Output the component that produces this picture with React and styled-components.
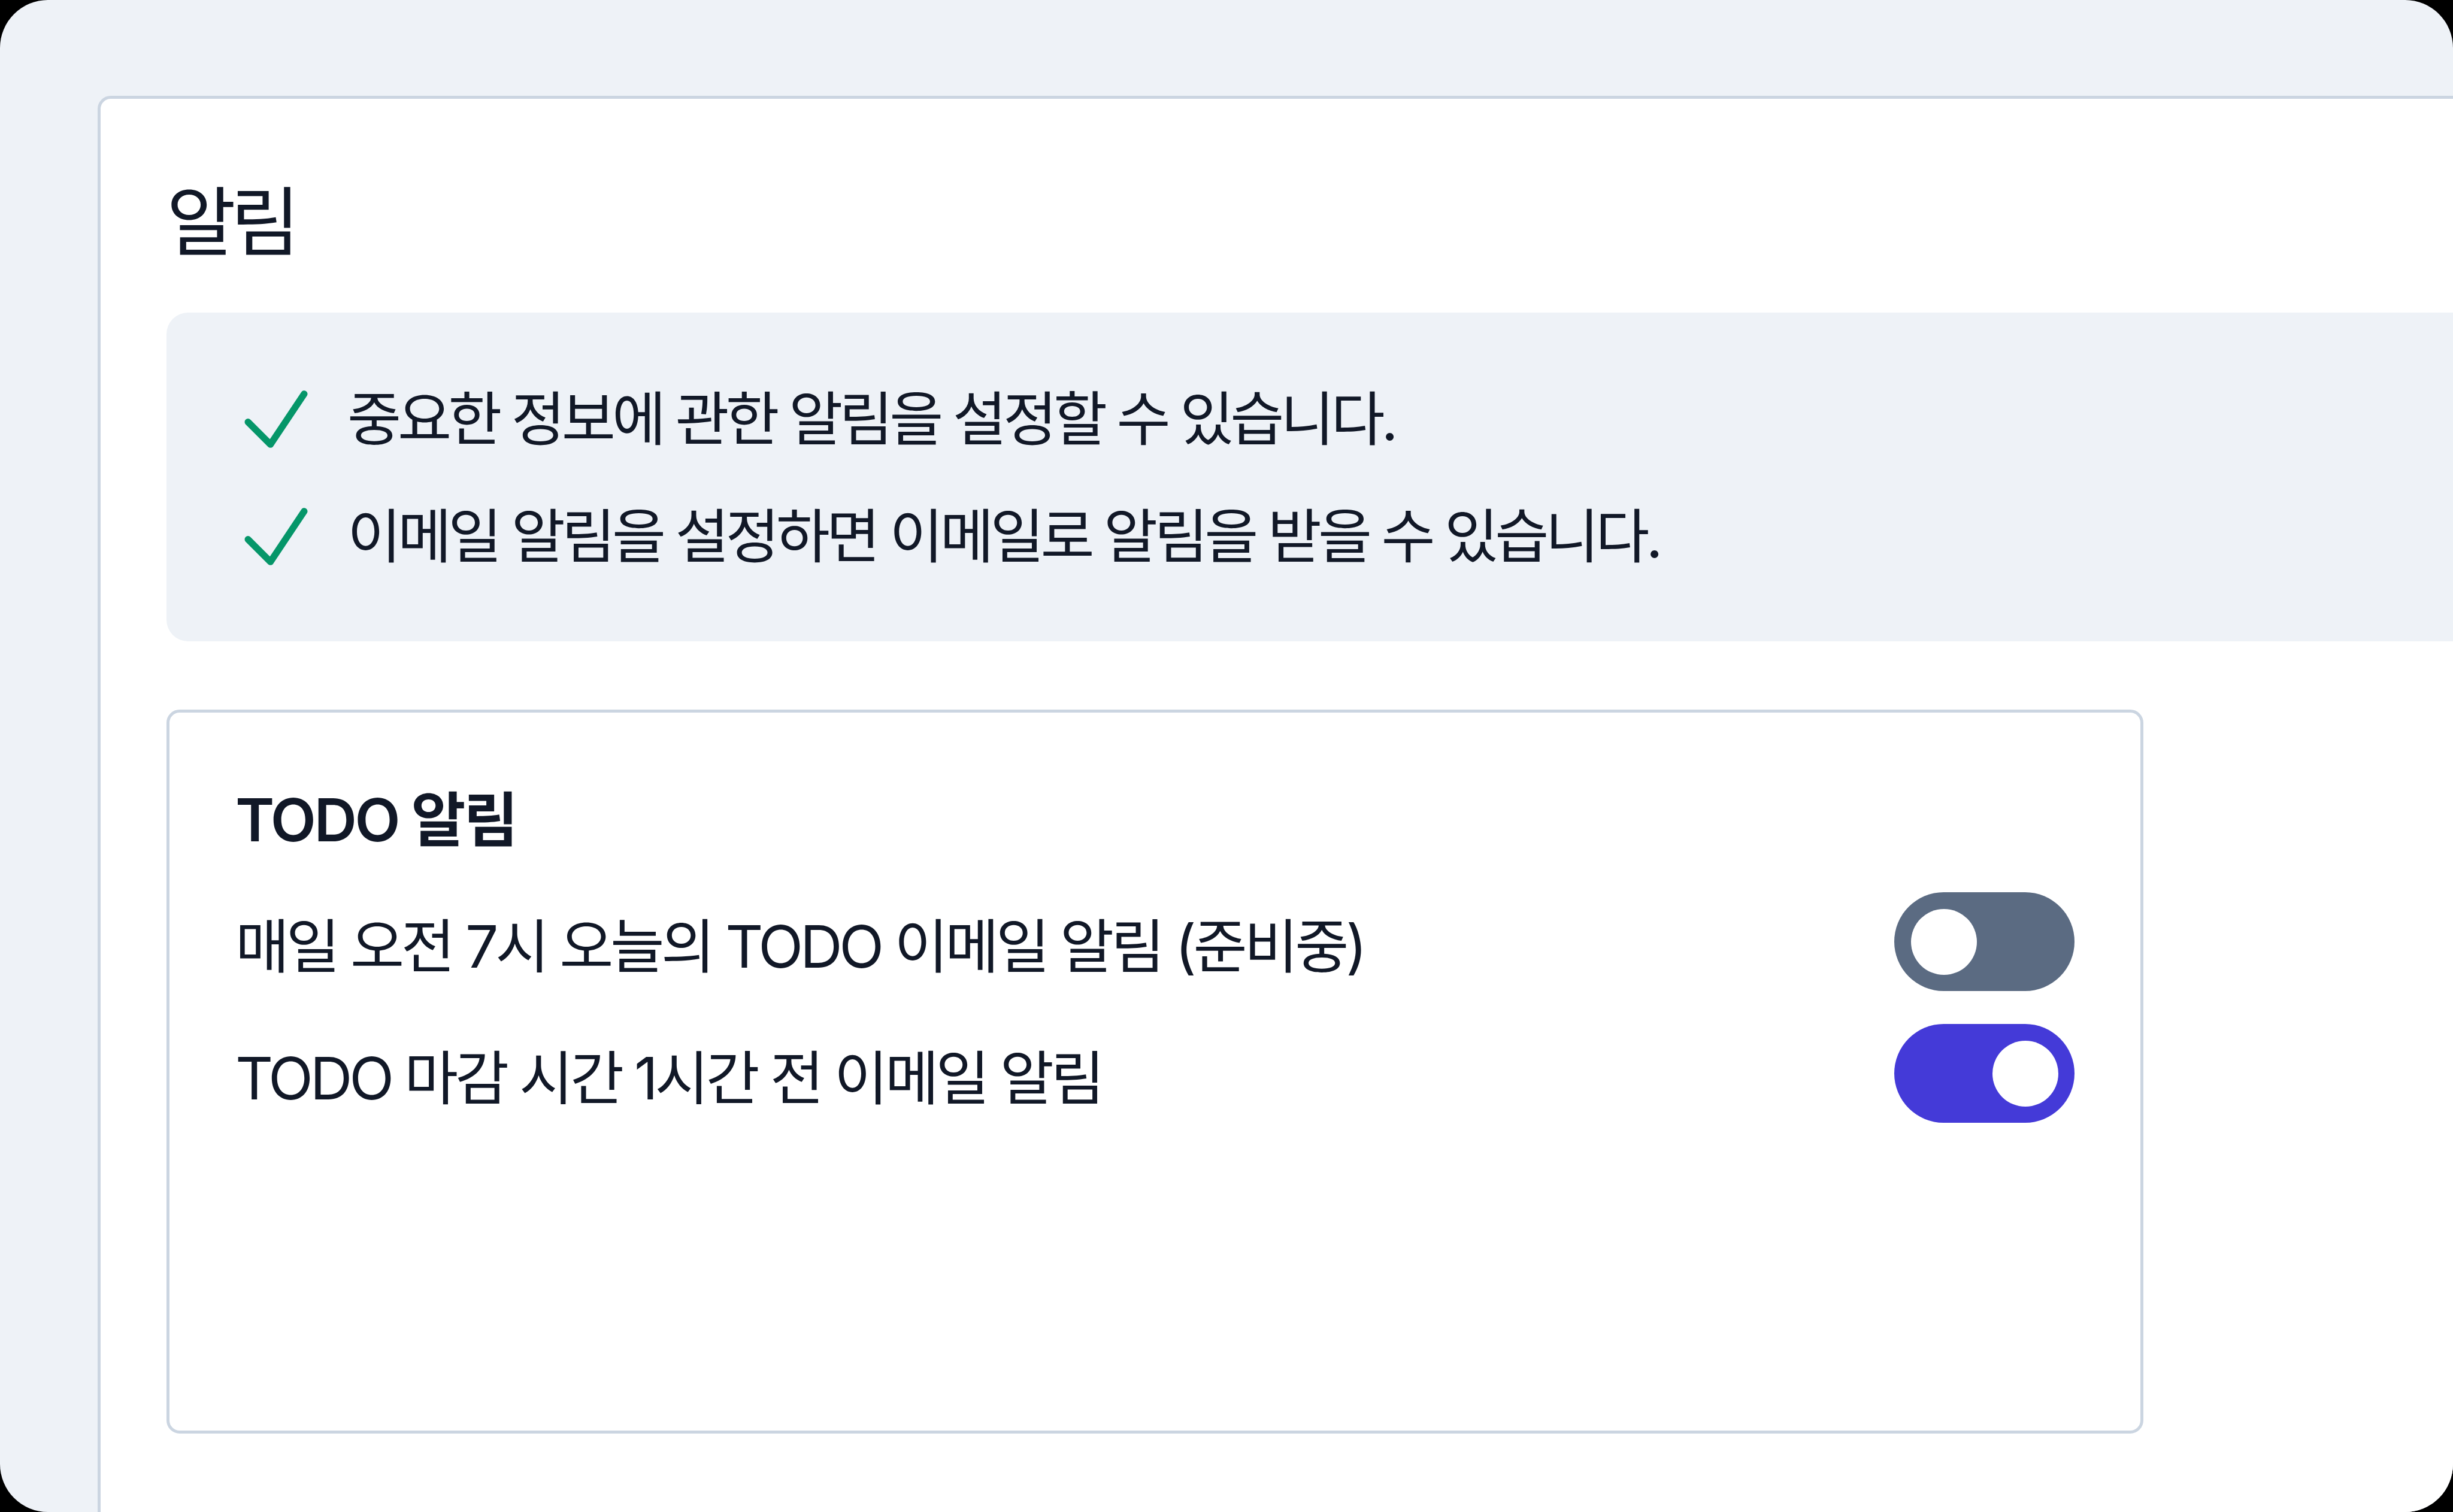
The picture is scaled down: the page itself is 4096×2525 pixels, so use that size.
import React, { useState } from 'react'
import styled, { createGlobalStyle } from 'styled-components'

const GlobalStyle = createGlobalStyle`
  * { box-sizing: border-box; }
  html, body { margin: 0; padding: 0; background: #000; }
  body {
    font-family: "Inter", "Noto Sans CJK KR", sans-serif;
    color: #111827;
    -webkit-font-smoothing: antialiased;
  }
`

const Screen = styled.div`
  width: 4096px;
  height: 2525px;
  overflow: hidden;
  border-radius: 80px;
  background: #eef2f7;
  padding: 160px 0 0 163px;
`

const Panel = styled.section`
  width: 4200px;
  min-height: 2600px;
  background: #fff;
  border: 5px solid #cbd5e1;
  border-radius: 22px;
  padding: 110px;
`

const Title = styled.h1`
  margin: 0 0 55px;
  font-size: 126px;
  line-height: 192px;
  font-weight: 400;
  letter-spacing: -0.07em;
  font-feature-settings: "palt" 1;
`

const Notice = styled.ul`
  list-style: none;
  margin: 0;
  padding: 103px 110px 100px 108px;
  background: #eef2f7;
  border-radius: 36px;
  display: flex;
  flex-direction: column;
  gap: 46px;
`

const NoticeItem = styled.li`
  display: flex;
  align-items: center;
  gap: 44px;
  font-size: 98px;
  line-height: 140px;
  letter-spacing: -0.062em;
  font-feature-settings: "palt" 1;
`

const CheckIcon = styled.svg`
  width: 150px;
  height: 150px;
  flex-shrink: 0;
  color: #059669;
`

const Card = styled.div`
  margin-top: 114px;
  width: 3301px;
  height: 1209px;
  border: 5px solid #cbd5e1;
  border-radius: 22px;
  padding: 111px 110px 110px;
  display: flex;
  flex-direction: column;
`

const CardTitle = styled.h2`
  margin: 0 0 52px;
  font-size: 99px;
  line-height: 137px;
  font-weight: 600;
  letter-spacing: -0.035em;
  font-feature-settings: "palt" 1;
`

const Rows = styled.div`
  display: flex;
  flex-direction: column;
  gap: 55px;
`

const Row = styled.div`
  display: flex;
  align-items: center;
  justify-content: space-between;
  height: 165px;
`

const RowLabel = styled.span`
  font-size: 98px;
  letter-spacing: -0.054em;
  font-feature-settings: "palt" 1;
`

const Toggle = styled.button`
  position: relative;
  width: 301px;
  height: 165px;
  border: none;
  padding: 0;
  border-radius: 9999px;
  background: ${p => (p.$on ? '#443ad8' : '#5b6b82')};
  cursor: pointer;
  flex-shrink: 0;
`

const Knob = styled.span`
  position: absolute;
  top: 27.5px;
  left: ${p => (p.$on ? '164px' : '27.5px')};
  width: 110px;
  height: 110px;
  border-radius: 50%;
  background: #fff;
  transition: left 0.2s;
`

const Check = () => (
  <CheckIcon viewBox="0 0 24 24" fill="none" stroke="currentColor" strokeWidth="1.8">
    <path strokeLinecap="round" strokeLinejoin="round" d="M4.5 12.75l6 6 9-13.5" />
  </CheckIcon>
)

const Switch = ({ on, onChange }) => (
  <Toggle $on={on} onClick={() => onChange(!on)} role="switch" aria-checked={on}>
    <Knob $on={on} />
  </Toggle>
)

export default function App() {
  const [daily, setDaily] = useState(false)
  const [deadline, setDeadline] = useState(true)

  return (
    <>
      <GlobalStyle />
      <Screen>
        <Panel>
          <Title>알림</Title>
          <Notice>
            <NoticeItem>
              <Check />
              중요한 정보에 관한 알림을 설정할 수 있습니다.
            </NoticeItem>
            <NoticeItem>
              <Check />
              이메일 알림을 설정하면 이메일로 알림을 받을 수 있습니다.
            </NoticeItem>
          </Notice>
          <Card>
            <CardTitle>TODO 알림</CardTitle>
            <Rows>
              <Row>
                <RowLabel>매일 오전 7시 오늘의 TODO 이메일 알림 (준비중)</RowLabel>
                <Switch on={daily} onChange={setDaily} />
              </Row>
              <Row>
                <RowLabel>TODO 마감 시간 1시간 전 이메일 알림</RowLabel>
                <Switch on={deadline} onChange={setDeadline} />
              </Row>
            </Rows>
          </Card>
        </Panel>
      </Screen>
    </>
  )
}
